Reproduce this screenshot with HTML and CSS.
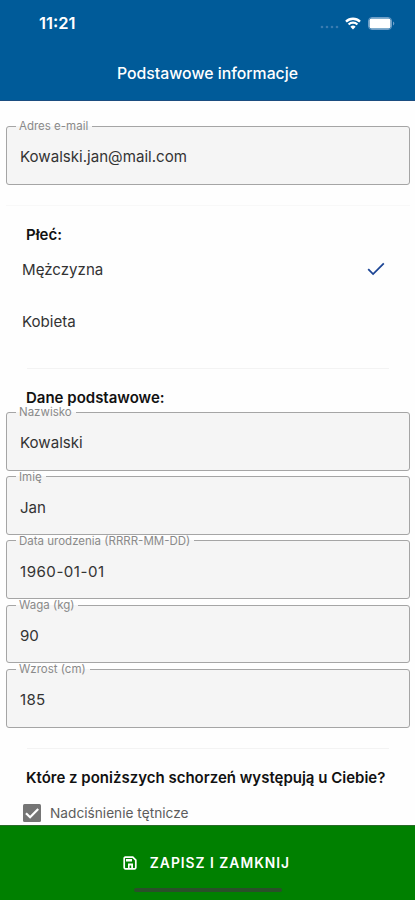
FILE: index.html
```html
<!DOCTYPE html>
<html lang="pl">
<head>
    <meta charset="UTF-8">
    <meta name="viewport" content="width=device-width, initial-scale=1.0">
    <title>Podstawowe informacje</title>
    <link rel="stylesheet" href="styles.css">
</head>
<body>
    <header>
        <div class="status-bar">
            <span class="time">11:21</span>
            <div class="status-icons">
                <svg class="signal" width="20" height="4" viewBox="0 0 20 4">
                    <circle cx="2" cy="2" r="1.3"/>
                    <circle cx="7" cy="2" r="1.3"/>
                    <circle cx="12" cy="2" r="1.3"/>
                    <circle cx="17" cy="2" r="1.3"/>
                </svg>
                <svg class="wifi" width="16" height="13" viewBox="0 0 16 13">
                    <path d="M1 4.6a10 10 0 0 1 14 0M3.6 7.5a6.3 6.3 0 0 1 8.8 0" fill="none" stroke="#fff" stroke-width="2.3"/>
                    <path d="M8 12.6L5.4 9.8a3.8 3.8 0 0 1 5.2 0z" fill="#fff"/>
                </svg>
                <svg class="battery" width="27" height="13" viewBox="0 0 27 13">
                    <rect x="0.5" y="0.5" width="23" height="12" rx="3.5" fill="none" stroke="#6f9fc8"/>
                    <rect x="1.5" y="1.5" width="21" height="10" rx="2" fill="#fff"/>
                    <path d="M25 4.5a2.2 2.2 0 0 1 0 4z" fill="#6f9fc8"/>
                </svg>
            </div>
        </div>
        <h1>Podstawowe informacje</h1>
    </header>

    <main>
        <fieldset class="field email">
            <legend>Adres e-mail</legend>
            <div class="value">Kowalski.jan@mail.com</div>
        </fieldset>

        <section class="gender">
            <h2>Płeć:</h2>
            <div class="option">
                <span>Mężczyzna</span>
                <svg width="18" height="14" viewBox="0 0 18 14">
                    <path d="M1.2 7.2l4.9 4.9L16.8 1.4" fill="none" stroke="#1c4595" stroke-width="1.8"/>
                </svg>
            </div>
            <div class="option">
                <span>Kobieta</span>
            </div>
        </section>

        <section class="basic">
            <h2>Dane podstawowe:</h2>
            <fieldset class="field">
                <legend>Nazwisko</legend>
                <div class="value">Kowalski</div>
            </fieldset>
            <fieldset class="field">
                <legend>Imię</legend>
                <div class="value">Jan</div>
            </fieldset>
            <fieldset class="field">
                <legend>Data urodzenia (RRRR-MM-DD)</legend>
                <div class="value date">1960-01-01</div>
            </fieldset>
            <fieldset class="field">
                <legend>Waga (kg)</legend>
                <div class="value">90</div>
            </fieldset>
            <fieldset class="field">
                <legend>Wzrost (cm)</legend>
                <div class="value number">185</div>
            </fieldset>
        </section>

        <section class="diseases">
            <h2>Które z poniższych schorzeń występują u Ciebie?</h2>
            <div class="check-row">
                <svg width="18" height="18" viewBox="0 0 18 18">
                    <rect width="18" height="18" rx="1.5" fill="#757575"/>
                    <path d="M3 9.2l4.1 4.1L15.2 5" fill="none" stroke="#fff" stroke-width="2.2"/>
                </svg>
                <span>Nadciśnienie tętnicze</span>
            </div>
        </section>
    </main>

    <footer>
        <div class="save">
            <svg width="14" height="14" viewBox="0 0 14 14">
                <path d="M2.2 1.2h7.6l3 3v7.4a1.2 1.2 0 0 1-1.2 1.2H2.4a1.2 1.2 0 0 1-1.2-1.2V2.2a1 1 0 0 1 1-1z" fill="none" stroke="#fff" stroke-width="1.7"/>
                <path d="M3 3h6v2.6H3zM5 7.5h5v4.7H8.2V9.4H6.6v2.8H5z" fill="#fff"/>
            </svg>
            <span>ZAPISZ I ZAMKNIJ</span>
        </div>
        <div class="home-bar"></div>
    </footer>
</body>
</html>
```
FILE: styles.css
```css
* {
    box-sizing: border-box;
}

body {
    font-family: Inter, "Liberation Sans", sans-serif;
    background-color: #fefefe;
    color: #333;
    margin: 0;
    height: 900px;
    display: flex;
    flex-direction: column;
    overflow: hidden;
}

svg {
    display: block;
    flex-shrink: 0;
}

header {
    background-color: #005b99;
    border-bottom: 1px solid #1b4d80;
    color: #fff;
    height: 101px;
    flex-shrink: 0;
}

.status-bar {
    display: flex;
    justify-content: space-between;
    align-items: center;
    height: 46px;
    padding: 0 20px 0 39px;
}

.time {
    font-size: 16.5px;
    font-weight: 600;
}

.status-icons {
    display: flex;
    align-items: center;
}

.signal {
    fill: #3a7cb0;
    margin: 8px 5px 0 0;
}

.wifi {
    margin-right: 7px;
}

h1 {
    font-size: 15.8px;
    font-weight: 500;
    line-height: 20px;
    text-align: center;
    margin: 18px 0 0;
}

main {
    flex: 1;
    min-height: 0;
    overflow: hidden;
    padding: 19px 5px 0 6px;
}

.field {
    border: 1px solid #a5a5a5;
    border-radius: 3px;
    background-color: #f5f5f5;
    height: 64.3px;
    margin: 0;
    padding: 0 13px;
}

.email {
    height: 65.3px;
}

legend {
    font-size: 11.5px;
    line-height: 12px;
    height: 12px;
    color: #8a8a8a;
    padding: 0 4px 0 3px;
    margin-left: -4px;
    white-space: nowrap;
}

.value {
    font-size: 15.1px;
    line-height: 20px;
    padding-top: 15px;
}

.date {
    letter-spacing: 0.5px;
}

.number {
    letter-spacing: 0.3px;
}

h2 {
    font-size: 15px;
    font-weight: 600;
    line-height: 20px;
    color: #111;
    margin: 0;
    padding-left: 20px;
}

.gender {
    border-top: 1px solid #f8f8f8;
    margin-top: 20px;
    padding-top: 19px;
}

.gender h2 {
    margin-bottom: -2px;
}

.option {
    display: flex;
    justify-content: space-between;
    align-items: center;
    height: 52px;
    padding: 0 25px 0 16px;
    font-size: 15.1px;
}

.basic::before,
.diseases::before {
    content: "";
    display: block;
    height: 1px;
    margin: 0 21px;
    background-color: #f3f3f3;
}

.basic {
    margin-top: 21px;
}

.basic h2 {
    margin: 19px 0 -2px;
}

.diseases {
    margin-top: 20px;
}

.diseases h2 {
    margin-top: 19px;
    white-space: nowrap;
}

.check-row {
    display: flex;
    align-items: center;
    gap: 9px;
    padding: 16px 0 0 17px;
    font-size: 13.7px;
    line-height: 18px;
    color: #5c5c5c;
}

footer {
    background-color: #008000;
    border-top: 1px solid #2a6b2a;
    color: #fff;
    height: 75px;
    flex-shrink: 0;
    display: flex;
    flex-direction: column;
    align-items: center;
}

.save {
    display: flex;
    align-items: center;
    gap: 13px;
    margin: 27px 2px 0 0;
    height: 20px;
    font-size: 13.8px;
    font-weight: 600;
    letter-spacing: 1px;
}

.home-bar {
    width: 148px;
    height: 4px;
    margin-top: 15px;
    border-radius: 2px;
    background-color: #294f29;
}
```
